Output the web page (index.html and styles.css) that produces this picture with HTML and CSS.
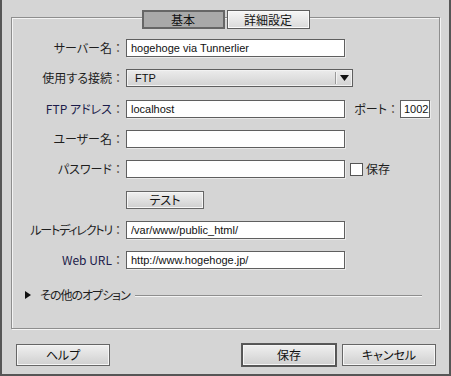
FILE: index.html
```html
<!DOCTYPE html>
<html lang="ja">
<head>
<meta charset="utf-8">
<link rel="stylesheet" href="styles.css">
</head>
<body>
<div class="window">
  <div class="group">
    <div class="tabs">
      <span class="tab tab-sel">基本</span>
      <span class="tab">詳細設定</span>
    </div>
    <div class="rows">
      <div class="row">
        <span class="lbl">サーバー名<span class="colon">：</span></span>
        <input class="field" type="text" value="hogehoge via Tunnerlier">
      </div>
      <div class="row">
        <span class="lbl">使用する接続<span class="colon">：</span></span>
        <div class="select"><span class="select-text">FTP</span><span class="select-btn"><svg width="9" height="6" viewBox="0 0 9 6"><path d="M0 0H9L4.5 6Z" fill="#111"/></svg></span></div>
      </div>
      <div class="row">
        <span class="lbl lbl-blue">FTP アドレス<span class="colon">：</span></span>
        <input class="field" type="text" value="localhost">
        <span class="port-lbl">ポート<span class="colon">：</span></span>
        <input class="field port" type="text" value="10022">
      </div>
      <div class="row">
        <span class="lbl">ユーザー名<span class="colon">：</span></span>
        <input class="field" type="text" value="">
      </div>
      <div class="row">
        <span class="lbl">パスワード<span class="colon">：</span></span>
        <input class="field" type="password" value="">
        <span class="check"></span>
        <span class="check-lbl">保存</span>
      </div>
      <div class="row">
        <span class="lbl"></span>
        <span class="btn btn-test">テスト</span>
      </div>
      <div class="row">
        <span class="lbl"><span class="tight">ルートディレクトリ</span><span class="colon">：</span></span>
        <input class="field" type="text" value="/var/www/public_html/">
      </div>
      <div class="row">
        <span class="lbl lbl-blue">Web URL<span class="colon">：</span></span>
        <input class="field" type="text" value="http://www.hogehoge.jp/">
      </div>
      <div class="row options">
        <span class="tri"></span>
        <span class="opt-text">その他のオプション</span>
        <span class="opt-line"></span>
      </div>
    </div>
  </div>
  <div class="footer">
    <span class="btn btn-foot">ヘルプ</span>
    <span class="spacer"></span>
    <span class="btn btn-foot btn-default">保存</span>
    <span class="btn btn-foot">キャンセル</span>
  </div>
</div>
</body>
</html>
```
FILE: styles.css
```css
* { box-sizing: border-box; }
html, body {
  margin: 0;
  padding: 0;
  background: #d5d5d5;
}
body {
  font-family: "Noto Sans CJK JP", "Liberation Sans", sans-serif;
  font-size: 12px;
  color: #1e1e1e;
  font-feature-settings: "palt";
}
.window {
  width: 451px;
  height: 376px;
  border: 2px solid #565656;
  border-top: none;
  background: #d5d5d5;
  display: flex;
  flex-direction: column;
}
.group {
  position: relative;
  margin: 17px 9px 0 9px;
  height: 312px;
  border: 1px solid #8e8e8e;
  box-shadow: inset 1px 1px 0 #f4f4f4, 1px 1px 0 #f4f4f4;
  padding-top: 21px;
}
.tabs {
  position: absolute;
  top: -8px;
  left: 0;
  right: 0;
  display: flex;
  justify-content: center;
  gap: 2px;
}
.tab {
  width: 83px;
  height: 19px;
  display: flex;
  align-items: center;
  justify-content: center;
  font-size: 12px;
  line-height: 1;
  color: #111;
  border: 1px solid #5e5e5e;
  background: linear-gradient(#f6f6f6, #dadada);
  box-shadow: inset 0 0 0 1px #fafafa;
}
.tab-sel {
  border: 2px solid #666;
  background: #a9a9a9;
  box-shadow: none;
}
.rows {
  display: flex;
  flex-direction: column;
  gap: 12.33px;
}
.row {
  display: flex;
  align-items: center;
  height: 18px;
}
.lbl {
  width: 112px;
  margin-right: 2px;
  text-align: right;
  white-space: nowrap;
  line-height: 18px;
  color: #1e1e1e;
}
.colon {
  font-feature-settings: normal;
  color: #4a4030;
}
.tight { letter-spacing: -1.2px; }
.lbl-blue { color: #1c1c4a; }
.field {
  width: 219px;
  height: 18px;
  margin: 0;
  padding: 0 0 0 4px;
  border: 1px solid #5f5f5f;
  box-shadow: 1px 1px 0 #eaeaea;
  background: #fff;
  font-family: "Liberation Sans", sans-serif;
  font-size: 11px;
  color: #111;
  outline: none;
}
.select {
  width: 227px;
  height: 18px;
  display: flex;
  border: 1px solid #5f5f5f;
  background: linear-gradient(#ececec, #d2d2d2);
  box-shadow: inset 0 0 0 1px #f2f2f2;
}
.select-text {
  flex: 1;
  padding-left: 8px;
  font-family: "Liberation Sans", sans-serif;
  font-size: 11px;
  line-height: 16px;
  color: #111;
}
.select-btn {
  width: 17px;
  display: flex;
  align-items: center;
  justify-content: center;
  border-left: 1px solid #9a9a9a;
  box-shadow: inset 1px 0 0 #f4f4f4;
  margin: 2px 0;
}
.port-lbl {
  width: 54px;
  text-align: right;
  white-space: nowrap;
  line-height: 18px;
}
.field.port {
  width: 30px;
  margin-left: 1px;
  padding-left: 3px;
}
.check {
  width: 13px;
  height: 13px;
  margin-left: 5px;
  border: 1px solid #555;
  background: #fff;
}
.check-lbl {
  margin-left: 3px;
  line-height: 18px;
}
.btn {
  display: flex;
  align-items: center;
  justify-content: center;
  border: 1px solid #666;
  background: linear-gradient(#f0f0f0, #cfcfcf);
  box-shadow: inset 0 0 0 1px #f6f6f6;
  color: #111;
  font-size: 12px;
  line-height: 1;
}
.btn-test {
  width: 78px;
  height: 18px;
}
.options {
  margin-top: 4px;
  padding-left: 13px;
}
.tri {
  width: 0;
  height: 0;
  border-top: 4px solid transparent;
  border-bottom: 4px solid transparent;
  border-left: 6px solid #111;
}
.opt-text {
  margin-left: 9px;
  line-height: 18px;
  letter-spacing: -1px;
}
.opt-line {
  flex: 1;
  height: 2px;
  margin: 2px 17px 0 5px;
  border-top: 1px solid #8e8e8e;
  border-bottom: 1px solid #f4f4f4;
}
.footer {
  display: flex;
  margin-top: 15px;
  padding: 0 13px 0 14px;
}
.spacer { flex: 1; }
.btn-foot {
  width: 94px;
  height: 22px;
}
.btn-default {
  margin-right: 6px;
  box-shadow: 0 0 0 1px #5a5a5a, inset 0 0 0 1px #f6f6f6;
  border-color: #555;
}
```
